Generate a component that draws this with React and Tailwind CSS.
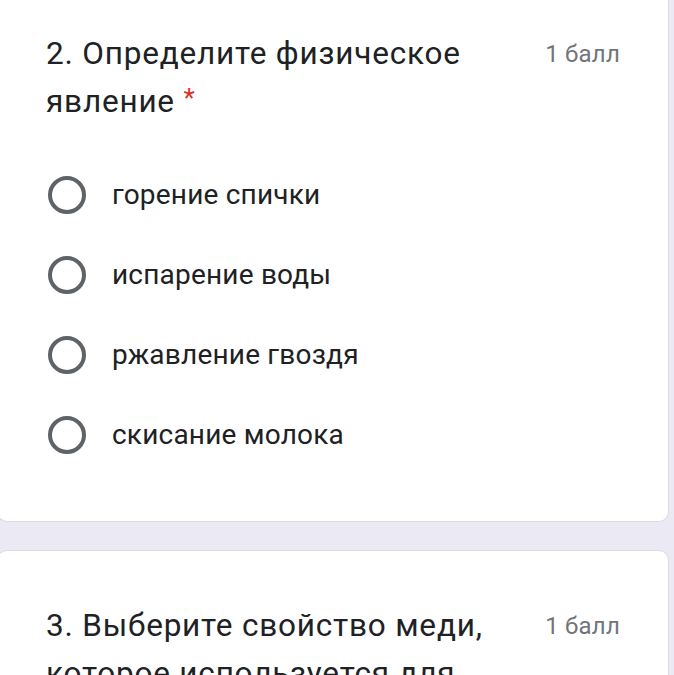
import React from 'react';

const options = ['горение спички', 'испарение воды', 'ржавление гвоздя', 'скисание молока'];

const Radio = ({ label }) => (
    <div className="flex items-center h-[80px]">
        <div className="ml-[2px] w-[38px] h-[38px] rounded-full border-[4px] border-[#5f6368] shrink-0" />
        <span className="ml-[26px] text-[28px] text-[#202124] tracking-[0.2px]">{label}</span>
    </div>
);

const App = () => {
    return (
        <div className="h-[675px] w-[674px] overflow-hidden bg-[#ebe9f3]" style={{ fontFamily: 'Roboto, "Noto Sans", sans-serif' }}>
            {/* карточка вопроса 2 */}
            <div className="ml-[-3px] w-[672px] bg-white border border-t-0 border-[#dcdbe3] rounded-b-[10px] pt-[30px] pb-[46px] pl-[48px] pr-[48px]">
                <div className="flex justify-between">
                    <div className="text-[31.5px] leading-[48px] text-[#202124] tracking-[0.8px]">
                        2. Определите физическое
                        <br />
                        явление <span className="text-[#d93025] text-[26px] align-top leading-[40px]">*</span>
                    </div>
                    <div className="text-[24px] leading-[48px] text-[#70757a] tracking-[0.2px] shrink-0">1 балл</div>
                </div>
                <div className="mt-[29px]">
                    {options.map((o) => (
                        <Radio key={o} label={o} />
                    ))}
                </div>
            </div>

            {/* карточка вопроса 3 */}
            <div className="mt-[28px] ml-[-3px] w-[672px] bg-white border border-[#dcdbe3] rounded-[10px] pt-[51px] pb-[40px] pl-[48px] pr-[48px]">
                <div className="flex justify-between">
                    <div className="text-[31.5px] leading-[48px] text-[#202124] tracking-[0.8px]">
                        3. Выберите свойство меди,
                        <br />
                        которое используется для
                    </div>
                    <div className="text-[24px] leading-[48px] text-[#70757a] tracking-[0.2px] shrink-0">1 балл</div>
                </div>
            </div>
        </div>
    );
};

export default App;
